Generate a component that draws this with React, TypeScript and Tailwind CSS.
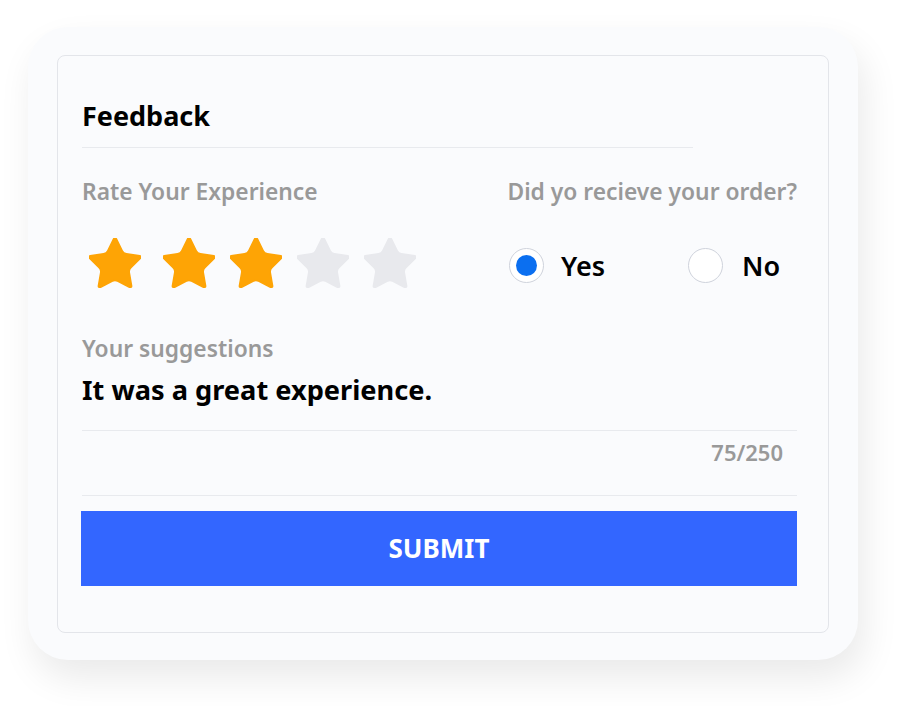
import React from "react";

const STAR =
  "M11.525 2.295a.53.53 0 0 1 .95 0l2.31 4.679a2.123 2.123 0 0 0 1.595 1.16l5.166.756a.53.53 0 0 1 .294.904l-3.736 3.638a2.123 2.123 0 0 0-.611 1.878l.882 5.14a.53.53 0 0 1-.771.56l-4.618-2.428a2.122 2.122 0 0 0-1.973 0L6.396 21.01a.53.53 0 0 1-.77-.56l.881-5.139a2.122 2.122 0 0 0-.611-1.879L2.16 9.795a.53.53 0 0 1 .294-.906l5.165-.755a2.122 2.122 0 0 0 1.597-1.16z";

function Star({ on }: { on: boolean }) {
  return (
    <svg width="52" height="50" viewBox="2 2.1 20 19.1" className="shrink-0">
      <path d={STAR} fill={on ? "#fea405" : "#e8e9ed"} stroke={on ? "#fea405" : "#e8e9ed"} strokeWidth="0.6" strokeLinejoin="round" />
    </svg>
  );
}

export default function App() {
  return (
    <div className="w-[900px] h-[706px] bg-white overflow-hidden" style={{ fontFamily: '"Noto Sans", "Open Sans", sans-serif' }}>
      <div className="ml-[28px] mt-[27px] w-[830px] h-[633px] rounded-[40px] bg-[#fafbfd] shadow-[6px_18px_36px_rgba(0,0,0,0.085)] pt-[28px] pl-[29px]">
        <div className="w-[772px] h-[578px] rounded-[8px] border border-[#e3e5ea] bg-[#fafbfd] pl-[23px] pr-[31px] flex flex-col">
          <div className="mt-[42px] ml-[1px] text-[27px] leading-[36px] font-bold text-black">Feedback</div>
          <div className="mt-[13px] ml-[1px] h-px w-[611px] bg-[#e8eaee]" />
          <div className="mt-[29px] ml-[1px] flex justify-between text-[22.8px] leading-[30px] font-semibold text-[#999999]">
            <span>Rate Your Experience</span>
            <span>Did yo recieve your order?</span>
          </div>
          <div className="mt-[31px] flex items-center">
            <div className="flex items-center ml-[8px]">
              <Star on />
              <div className="ml-[22px] flex gap-[15px]">
                <Star on />
                <Star on />
                <Star on={false} />
                <Star on={false} />
              </div>
            </div>
            <div className="ml-[93px] flex items-center mt-[5px]">
              <div className="w-[35px] h-[35px] rounded-full border border-[#cfd3dc] bg-white flex items-center justify-center">
                <div className="w-[21px] h-[21px] rounded-full bg-[#0b6ff0]" />
              </div>
              <span className="ml-[17px] text-[27px] leading-[34px] font-semibold text-black">Yes</span>
              <div className="ml-[83px] w-[35px] h-[35px] rounded-full border border-[#cfd3dc] bg-white" />
              <span className="ml-[19px] text-[27px] leading-[34px] font-semibold text-black">No</span>
            </div>
          </div>
          <div className="mt-[46px] ml-[1px] text-[22.8px] leading-[30px] font-semibold text-[#999999]">Your suggestions</div>
          <div className="mt-[8px] ml-[1px] text-[27.2px] leading-[36px] font-bold text-black">It was a great experience.</div>
          <div className="mt-[22px] ml-[1px] h-px bg-[#e8eaee]" />
          <div className="mt-[6px] pr-[14px] text-right text-[22px] leading-[30px] font-semibold text-[#999999]">75/250</div>
          <div className="mt-[28px] ml-[1px] h-px bg-[#e8eaee]" />
          <button className="mt-[15px] h-[75px] w-full bg-[#3366ff] text-white text-[26px] font-bold flex items-center justify-center">
            SUBMIT
          </button>
        </div>
      </div>
    </div>
  );
}
